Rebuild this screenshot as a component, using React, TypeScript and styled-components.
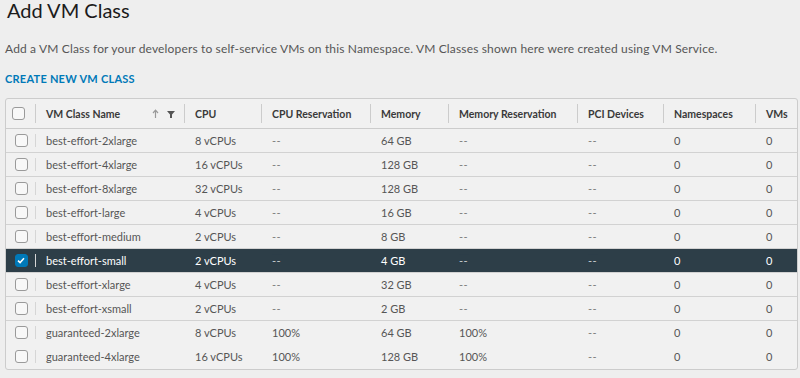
import React, { useState } from "react";
import styled, { createGlobalStyle } from "styled-components";

const GlobalStyle = createGlobalStyle`
  body {
    margin: 0;
    background: #eeeeee;
    font-family: "Lato", "Open Sans", sans-serif;
    color: #565656;
  }
`;

const COLUMNS = "30px 149px 77px 109px 78px 129px 86px 92px 1fr";

const Page = styled.div`
  padding: 0 2px 0 5px;
  height: 378px;
  overflow: hidden;
`;

const Title = styled.h1`
  margin: 0;
  padding-left: 2px;
  font-size: 20px;
  font-weight: 400;
  line-height: 20px;
  color: #1b1b1b;
`;

const Intro = styled.p`
  margin: 19px 0 0;
  font-size: 12px;
  letter-spacing: 0.15px;
  line-height: 20px;
  color: #565656;
`;

const CreateLink = styled.a`
  display: inline-block;
  margin-top: 12px;
  font-size: 11px;
  font-weight: 700;
  letter-spacing: 0.25px;
  line-height: 16px;
  color: #0079b8;
  cursor: pointer;
`;

const Grid = styled.div`
  margin-top: 11px;
  border: 1px solid #cccccc;
  border-radius: 3px;
  background: #f1f1f1;
  overflow: hidden;
`;

const HeaderRow = styled.div`
  display: grid;
  grid-template-columns: ${COLUMNS};
  height: 29px;
  border-bottom: 1px solid #cccccc;
  font-size: 10.5px;
  font-weight: 700;
  color: #3a3a3a;
`;

const HeaderCell = styled.div<{ $first?: boolean }>`
  position: relative;
  display: flex;
  align-items: center;
  justify-content: ${({ $first }) => ($first ? "center" : "flex-start")};
  padding-left: ${({ $first }) => ($first ? "0" : "10px")};
  padding-right: 6px;

  &:not(:last-child)::after {
    content: "";
    position: absolute;
    right: 0;
    top: 5px;
    bottom: 5px;
    width: 1px;
    background: #cccccc;
  }
`;

const SortIcons = styled.span`
  margin-left: auto;
  display: flex;
  align-items: center;
  gap: 8px;
  margin-right: 4px;
  color: #666;
`;

const Row = styled.div<{ $selected?: boolean; $line?: boolean }>`
  display: grid;
  grid-template-columns: ${COLUMNS};
  height: 24px;
  box-sizing: border-box;
  border-bottom: 1px solid ${({ $line }) => ($line ? "#d2d2d2" : "transparent")};
  background: ${({ $selected }) => ($selected ? "#2d3e48" : "transparent")};
  color: ${({ $selected }) => ($selected ? "#ffffff" : "#565656")};
  font-size: 11px;
  cursor: pointer;
`;

const Cell = styled.div<{ $first?: boolean }>`
  position: relative;
  display: flex;
  align-items: center;
  justify-content: ${({ $first }) => ($first ? "center" : "flex-start")};
  padding-left: ${({ $first }) => ($first ? "0" : "10px")};
  white-space: nowrap;

  ${({ $first }) =>
    $first &&
    `&::after {
      content: "";
      position: absolute;
      right: 0;
      top: 5px;
      bottom: 5px;
      width: 1px;
      background: #d6d6d6;
    }`}
`;

const Dim = styled.span`
  color: inherit;
  opacity: 0.75;
  letter-spacing: 0.5px;
`;

const Box = styled.span<{ $checked?: boolean }>`
  display: inline-flex;
  align-items: center;
  justify-content: center;
  width: 13px;
  height: 13px;
  border-radius: 3px;
  box-sizing: border-box;
  border: 1px solid ${({ $checked }) => ($checked ? "#0079b8" : "#9a9a9a")};
  background: ${({ $checked }) => ($checked ? "#0079b8" : "#f8f8f8")};
`;

type VmClass = {
  name: string;
  cpu: string;
  cpuRes: string;
  memory: string;
  memRes: string;
};

const rows: VmClass[] = [
  { name: "best-effort-2xlarge", cpu: "8 vCPUs", cpuRes: "--", memory: "64 GB", memRes: "--" },
  { name: "best-effort-4xlarge", cpu: "16 vCPUs", cpuRes: "--", memory: "128 GB", memRes: "--" },
  { name: "best-effort-8xlarge", cpu: "32 vCPUs", cpuRes: "--", memory: "128 GB", memRes: "--" },
  { name: "best-effort-large", cpu: "4 vCPUs", cpuRes: "--", memory: "16 GB", memRes: "--" },
  { name: "best-effort-medium", cpu: "2 vCPUs", cpuRes: "--", memory: "8 GB", memRes: "--" },
  { name: "best-effort-small", cpu: "2 vCPUs", cpuRes: "--", memory: "4 GB", memRes: "--" },
  { name: "best-effort-xlarge", cpu: "4 vCPUs", cpuRes: "--", memory: "32 GB", memRes: "--" },
  { name: "best-effort-xsmall", cpu: "2 vCPUs", cpuRes: "--", memory: "2 GB", memRes: "--" },
  { name: "guaranteed-2xlarge", cpu: "8 vCPUs", cpuRes: "100%", memory: "64 GB", memRes: "100%" },
  { name: "guaranteed-4xlarge", cpu: "16 vCPUs", cpuRes: "100%", memory: "128 GB", memRes: "100%" },
];

const Check = ({ checked }: { checked?: boolean }) => (
  <Box $checked={checked}>
    {checked && (
      <svg width="8" height="7" viewBox="0 0 8 7">
        <path d="M1 3.6 L3.1 5.6 L7 1.2" fill="none" stroke="#fff" strokeWidth="1.5" />
      </svg>
    )}
  </Box>
);

const val = (v: string) => (v === "--" ? <Dim>--</Dim> : v);

const App = () => {
  const [selected, setSelected] = useState("best-effort-small");

  return (
    <Page>
      <GlobalStyle />
      <Title>Add VM Class</Title>
      <Intro>
        Add a VM Class for your developers to self-service VMs on this Namespace. VM Classes shown here were
        created using VM Service.
      </Intro>
      <CreateLink>CREATE NEW VM CLASS</CreateLink>
      <Grid>
        <HeaderRow>
          <HeaderCell $first>
            <Check />
          </HeaderCell>
          <HeaderCell>
            VM Class Name
            <SortIcons>
              <svg width="7" height="9" viewBox="0 0 7 9">
                <path d="M3.5 9 V1.5 M1 4 L3.5 1.2 L6 4" fill="none" stroke="#9a9a9a" strokeWidth="1.2" />
              </svg>
              <svg width="8" height="8" viewBox="0 0 8 8">
                <path d="M0 1 H8 L5 4.5 V8 H3 V4.5 Z" fill="#555" />
              </svg>
            </SortIcons>
          </HeaderCell>
          <HeaderCell>CPU</HeaderCell>
          <HeaderCell>CPU Reservation</HeaderCell>
          <HeaderCell>Memory</HeaderCell>
          <HeaderCell>Memory Reservation</HeaderCell>
          <HeaderCell>PCI Devices</HeaderCell>
          <HeaderCell>Namespaces</HeaderCell>
          <HeaderCell>VMs</HeaderCell>
        </HeaderRow>
        {rows.map((r, i) => {
          const isSel = r.name === selected;
          return (
            <Row key={r.name} $selected={isSel} $line={i < 8} onClick={() => setSelected(r.name)}>
              <Cell $first>
                <Check checked={isSel} />
              </Cell>
              <Cell>{r.name}</Cell>
              <Cell>{r.cpu}</Cell>
              <Cell>{val(r.cpuRes)}</Cell>
              <Cell>{r.memory}</Cell>
              <Cell>{val(r.memRes)}</Cell>
              <Cell>
                <Dim>--</Dim>
              </Cell>
              <Cell>0</Cell>
              <Cell>0</Cell>
            </Row>
          );
        })}
      </Grid>
    </Page>
  );
};

export default App;
